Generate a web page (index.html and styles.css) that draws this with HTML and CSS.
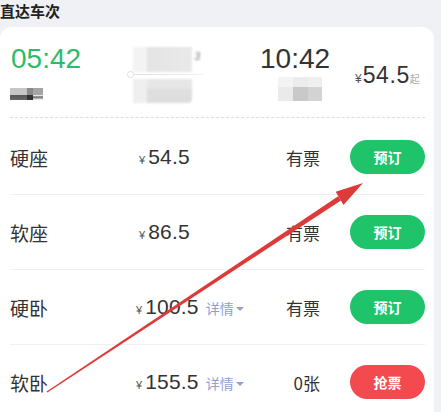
FILE: index.html
```html
<!DOCTYPE html>
<html lang="zh">
<head>
<meta charset="utf-8">
<link rel="stylesheet" href="styles.css">
</head>
<body>
<div class="page">
  <h2 class="title">直达车次</h2>
  <div class="card">
    <div class="summary">
      <div class="col dep">
        <div class="time green">05:42</div>
        <div class="mosaic m-left"><i class="b1"></i><i class="b2"></i><i class="b3"></i></div>
      </div>
      <div class="col mid">
        <div class="mrow top"><i class="pa"></i><i class="pb"><span class="frag">3</span></i></div>
        <div class="track"><span class="dot"></span><span class="line"></span></div>
        <div class="mrow bot"><i class="pa"></i><i class="pb"></i></div>
      </div>
      <div class="col arr">
        <div class="time">10:42</div>
        <div class="mosaic m-right"><i class="b1"></i><i class="b2"></i><i class="b3"></i></div>
      </div>
      <div class="col fare">
        <span class="yen">¥</span><span class="amt">54.5</span><span class="qi">起</span>
      </div>
    </div>
    <div class="seats">
      <div class="seat">
        <span class="name">硬座</span>
        <span class="price"><span class="yen">¥</span><span class="num">54.5</span></span>
        <span class="stock">有票</span>
        <button class="btn green-btn">预订</button>
      </div>
      <div class="seat">
        <span class="name">软座</span>
        <span class="price"><span class="yen">¥</span><span class="num">86.5</span></span>
        <span class="stock">有票</span>
        <button class="btn green-btn">预订</button>
      </div>
      <div class="seat">
        <span class="name">硬卧</span>
        <span class="price shift"><span class="yen">¥</span><span class="num">100.5</span><span class="detail">详情<span class="caret"></span></span></span>
        <span class="stock">有票</span>
        <button class="btn green-btn">预订</button>
      </div>
      <div class="seat">
        <span class="name">软卧</span>
        <span class="price shift"><span class="yen">¥</span><span class="num">155.5</span><span class="detail">详情<span class="caret"></span></span></span>
        <span class="stock">0张</span>
        <button class="btn red-btn">抢票</button>
      </div>
    </div>
  </div>
  <svg class="arrow" width="441" height="412" viewBox="0 0 441 412">
    <polygon points="46.6,391.6 47.4,392.4 341.0,200.5 338.2,196.3" fill="#de3a3a"/>
    <polygon points="363,183 343.5,205 335.7,191.8" fill="#de3a3a"/>
  </svg>
</div>
</body>
</html>
```

FILE: styles.css
```css
html, body {
  margin: 0;
  padding: 0;
  background: #eff1f5;
}
body {
  width: 441px;
  height: 412px;
  overflow: hidden;
  font-family: "Liberation Sans", "Noto Sans CJK SC", sans-serif;
  color: #333;
}
.page {
  position: relative;
  width: 441px;
  height: 412px;
}
.title {
  margin: 0;
  font-family: "Noto Sans CJK SC", sans-serif;
  font-size: 15px;
  line-height: 22px;
  font-weight: 700;
  color: #222;
  height: 22px;
}
.card {
  margin-top: 5px;
  width: 434px;
  box-sizing: border-box;
  padding: 0 9px 0 10px;
  background: #fff;
  border-radius: 12px 12px 0 0;
  height: 385px;
}
.summary {
  display: grid;
  grid-template-columns: 118px 132px 95px 1fr;
  height: 91px;
  box-sizing: border-box;
  padding-top: 16px;
  border-bottom: 1px dashed #dedede;
}
.col { display: flex; flex-direction: column; }
.time {
  font-size: 28px;
  line-height: 32px;
  color: #333;
}
.dep .time { padding-left: 1px; }
.time.green { color: #2dbb6a; }
.mosaic { display: flex; }
.mosaic i { display: block; }
.m-left { margin-top: 13px; height: 12px; filter: blur(0.6px); }
.m-left .b1 { width: 17px; background: linear-gradient(#c6c6c6 60%, #555 60%, #666); }
.m-left .b2 { width: 6px; background: linear-gradient(#8a8a8a 60%, #333 60%); }
.m-left .b3 { width: 10px; background: linear-gradient(#a5a5a5 60%, #fff 60%, #666 75%, #fff); }
.m-right { margin-top: 2px; margin-left: 18px; height: 24px; filter: blur(0.7px); border-radius: 0 0 6px 0; overflow: hidden; }
.m-right .b1 { width: 15px; background: linear-gradient(#f3f3f3 40%, #eaeaea 40%); }
.m-right .b2 { width: 15px; background: linear-gradient(#ececec 40%, #c9c9c9 40%); }
.m-right .b3 { width: 14px; background: linear-gradient(#efefef 40%, #d3d3d3 40%); }
.mid { padding-top: 4px; }
.mrow { display: flex; margin-left: 5px; filter: blur(0.8px); }
.mrow i { display: block; }
.mrow.top { height: 25px; }
.mrow.top .pa { width: 14px; background: #f3f3f3; }
.mrow.top .pb { width: 45px; background: linear-gradient(90deg, #e4e4e4, #e9e9e9); display: flex; justify-content: flex-end; }
.frag { font-size: 10px; line-height: 20px; color: #777; margin-right: -8px; }
.mrow.bot { height: 24px; margin-top: 3px; }
.mrow.bot .pa { width: 14px; background: #efefef; }
.mrow.bot .pb { width: 45px; background: linear-gradient(#e6e6e6 40%, #dedede 40%); border-radius: 0 0 4px 0; }
.track { display: flex; align-items: center; height: 4px; margin-left: -1px; }
.dot { width: 5px; height: 5px; border: 1px solid #ddd; border-radius: 50%; background: #fff; }
.line { width: 70px; height: 1px; background: linear-gradient(90deg, #ddd, #f3f3f3); }
.fare {
  flex-direction: row;
  align-items: baseline;
  margin-top: 19px;
  height: 26px;
  line-height: 26px;
}
.fare .yen { font-size: 12px; color: #555; margin-right: 1px; }
.fare .amt { font-size: 23px; color: #333; letter-spacing: 0.6px; }
.fare .qi { font-family: "Noto Sans CJK SC", sans-serif; font-size: 10px; color: #aaa; margin-left: 0; }
.seats { padding-top: 2px; }
.seat {
  display: grid;
  grid-template-columns: 128px 1fr auto 75px;
  align-items: center;
  height: 74px;
  border-bottom: 1px solid #f0f0f0;
}
.name {
  font-family: "Noto Sans CJK SC", sans-serif;
  font-size: 19px;
  color: #333;
}
.price { display: flex; align-items: baseline; padding-left: 1px; }
.price.shift { margin-left: -3px; }
.price .yen { font-size: 11px; color: #555; margin-right: 3px; }
.price .num { font-size: 21px; color: #333; letter-spacing: 0.2px; }
.detail {
  font-family: "Noto Sans CJK SC", sans-serif;
  font-size: 14px;
  color: #8ea2d2;
  margin-left: 7px;
  display: inline-flex;
  align-items: center;
}
.caret {
  width: 0; height: 0;
  border-left: 4px solid transparent;
  border-right: 4px solid transparent;
  border-top: 4px solid #8ea2d2;
  margin-left: 2px;
  margin-top: 2px;
}
.stock {
  font-family: "Noto Sans CJK SC", sans-serif;
  font-size: 17px;
  color: #333;
  margin-right: 30px;
  text-align: right;
}
.btn {
  width: 75px;
  height: 34px;
  border: none;
  border-radius: 17px;
  color: #fff;
  font-family: "Noto Sans CJK SC", sans-serif;
  font-size: 14px;
  font-weight: 700;
  padding: 0;
}
.green-btn { background: #1fc46a; }
.red-btn { background: #f24a4f; }
.arrow {
  position: absolute;
  left: 0;
  top: 0;
  pointer-events: none;
}
```
